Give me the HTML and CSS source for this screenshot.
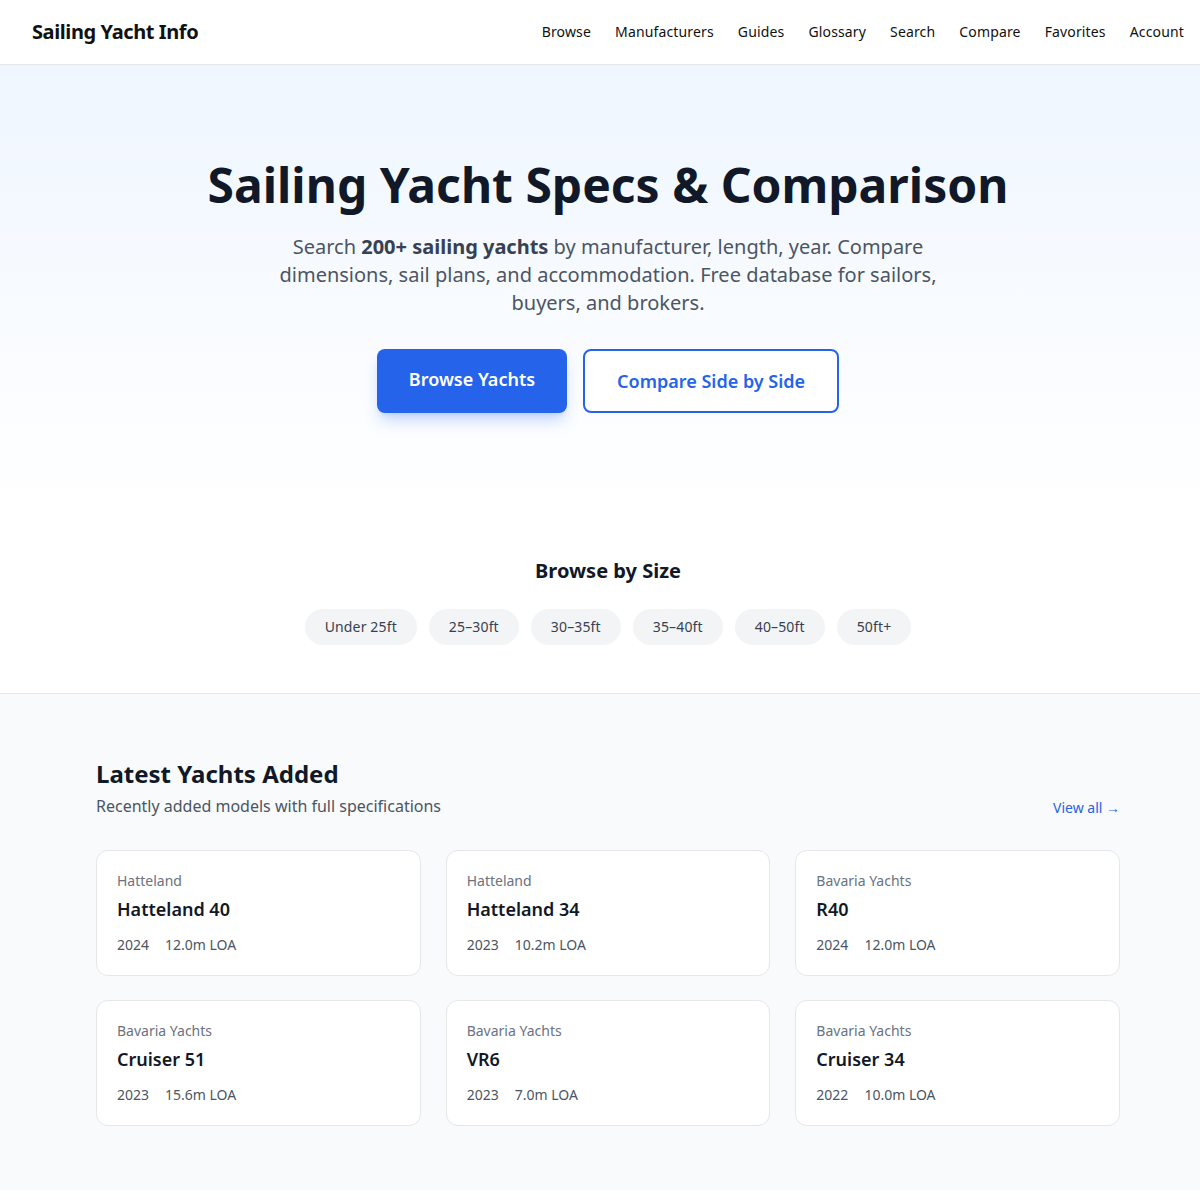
FILE: index.html
```html
<!DOCTYPE html>
<html lang="en">
<head>
  <meta charset="UTF-8">
  <title>Sailing Yacht Info</title>
  <meta name="viewport" content="width=device-width, initial-scale=1.0">
  <link rel="stylesheet" href="styles.css">
</head>
<body>

<header class="topbar">
  <a class="logo" href="#">Sailing Yacht Info</a>
  <nav class="nav">
    <a href="#">Browse</a>
    <a href="#">Manufacturers</a>
    <a href="#">Guides</a>
    <a href="#">Glossary</a>
    <a href="#">Search</a>
    <a href="#">Compare</a>
    <a href="#">Favorites</a>
    <a href="#">Account</a>
  </nav>
</header>

<section class="hero">
  <h1>Sailing Yacht Specs &amp; Comparison</h1>
  <p class="lead">Search <strong>200+ sailing yachts</strong> by manufacturer, length, year. Compare dimensions, sail plans, and accommodation. Free database for sailors, buyers, and brokers.</p>
  <div class="actions">
    <a class="btn btn-primary" href="#">Browse Yachts</a>
    <a class="btn btn-outline" href="#">Compare Side by Side</a>
  </div>
</section>

<section class="sizes">
  <h2>Browse by Size</h2>
  <div class="pills">
    <a class="pill" href="#">Under 25ft</a>
    <a class="pill" href="#">25–30ft</a>
    <a class="pill" href="#">30–35ft</a>
    <a class="pill" href="#">35–40ft</a>
    <a class="pill" href="#">40–50ft</a>
    <a class="pill" href="#">50ft+</a>
  </div>
</section>

<section class="latest">
  <div class="container">
    <div class="latest-head">
      <div>
        <h2>Latest Yachts Added</h2>
        <p>Recently added models with full specifications</p>
      </div>
      <a class="view-all" href="#">View all →</a>
    </div>

    <div class="cards">
      <a class="card" href="#">
        <div class="brand">Hatteland</div>
        <div class="model">Hatteland 40</div>
        <div class="meta"><span>2024</span><span>12.0m LOA</span></div>
      </a>
      <a class="card" href="#">
        <div class="brand">Hatteland</div>
        <div class="model">Hatteland 34</div>
        <div class="meta"><span>2023</span><span>10.2m LOA</span></div>
      </a>
      <a class="card" href="#">
        <div class="brand">Bavaria Yachts</div>
        <div class="model">R40</div>
        <div class="meta"><span>2024</span><span>12.0m LOA</span></div>
      </a>
      <a class="card" href="#">
        <div class="brand">Bavaria Yachts</div>
        <div class="model">Cruiser 51</div>
        <div class="meta"><span>2023</span><span>15.6m LOA</span></div>
      </a>
      <a class="card" href="#">
        <div class="brand">Bavaria Yachts</div>
        <div class="model">VR6</div>
        <div class="meta"><span>2023</span><span>7.0m LOA</span></div>
      </a>
      <a class="card" href="#">
        <div class="brand">Bavaria Yachts</div>
        <div class="model">Cruiser 34</div>
        <div class="meta"><span>2022</span><span>10.0m LOA</span></div>
      </a>
    </div>
  </div>
</section>

</body>
</html>
```

FILE: styles.css
```css
body {
  margin: 0;
  font-family: "Noto Sans", "Open Sans", sans-serif;
  color: #111827;
  background: #fff;
}

a {
  text-decoration: none;
  color: inherit;
}

/* top navigation */
.topbar {
  height: 62px;
  display: flex;
  align-items: center;
  justify-content: space-between;
  padding: 0 16px 2px 32px;
  border-bottom: 1px solid #e5e7eb;
  background: #fff;
}

.logo {
  font-size: 20px;
  font-weight: 700;
  color: #111;
  letter-spacing: -0.4px;
}

.nav {
  display: flex;
  gap: 24px;
}

.nav a {
  font-size: 14px;
  color: #111;
  letter-spacing: 0.15px;
}

/* hero */
.hero {
  background: linear-gradient(to bottom, #eff6ff, #ffffff);
  padding: 96px 0 96px 16px;
  text-align: center;
}

.hero h1 {
  margin: 0;
  font-size: 48px;
  line-height: 48px;
  font-weight: 700;
  color: #111827;
}

.lead {
  max-width: 672px;
  margin: 24px auto 0;
  font-size: 20px;
  line-height: 28px;
  color: #4b5563;
}

.lead strong {
  color: #374151;
}

.actions {
  display: flex;
  justify-content: center;
  gap: 16px;
  margin-top: 32px;
}

.btn {
  font-size: 18px;
  line-height: 28px;
  font-weight: 600;
  border-radius: 8px;
}

.btn-primary {
  background: #2563eb;
  color: #fff;
  padding: 16px 32px 20px;
  box-shadow: 0 10px 15px -3px rgba(37,99,235,0.25), 0 4px 6px -4px rgba(37,99,235,0.2);
}

.btn-outline {
  background: #fff;
  color: #2563eb;
  border: 2px solid #2563eb;
  padding: 16px 32px;
}

/* size filter */
.sizes {
  padding: 48px 0 48px 16px;
  text-align: center;
  border-bottom: 1px solid #e5e7eb;
}

.sizes h2 {
  margin: 0;
  font-size: 20px;
  line-height: 28px;
  font-weight: 700;
}

.pills {
  display: flex;
  justify-content: center;
  gap: 12px;
  margin-top: 24px;
}

.pill {
  background: #f3f4f6;
  color: #374151;
  font-size: 14px;
  line-height: 20px;
  padding: 8px 20px;
  border-radius: 999px;
  letter-spacing: 0.15px;
}

/* latest yachts */
.latest {
  background: #f9fafb;
  padding: 64px 0 64px 16px;
}

.container {
  max-width: 1024px;
  margin: 0 auto;
}

.latest-head {
  display: flex;
  justify-content: space-between;
  align-items: flex-end;
  margin-bottom: 32px;
}

.latest-head h2 {
  margin: 0;
  font-size: 24px;
  line-height: 32px;
  font-weight: 700;
}

.latest-head p {
  margin: 4px 0 0;
  font-size: 16px;
  line-height: 24px;
  color: #4b5563;
}

.view-all {
  font-size: 14px;
  line-height: 20px;
  color: #2563eb;
}

.cards {
  display: grid;
  grid-template-columns: repeat(3, 1fr);
  gap: 24px 25px;
}

.card {
  background: #fff;
  border: 1px solid #e5e7eb;
  border-radius: 12px;
  padding: 20px;
}

.brand {
  font-size: 14px;
  line-height: 20px;
  color: #6b7280;
}

.model {
  margin-top: 4px;
  font-size: 18px;
  line-height: 28px;
  font-weight: 600;
  color: #111827;
}

.meta {
  display: flex;
  gap: 16px;
  margin-top: 12px;
  font-size: 14px;
  line-height: 20px;
  color: #4b5563;
}
```
